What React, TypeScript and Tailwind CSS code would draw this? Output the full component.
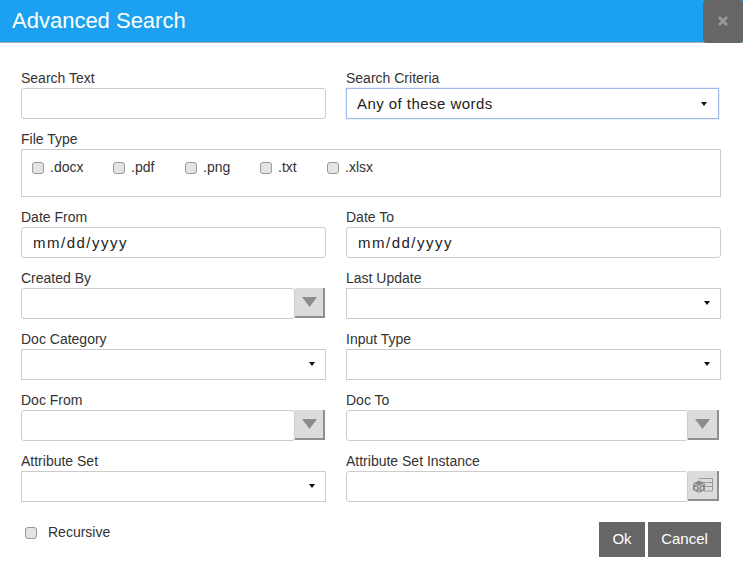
import React from 'react';

const inputBox = 'w-full h-[31px] rounded-[3px] border border-[#ccc] bg-white px-[11px] text-[15px] text-[#222] outline-none';

function Field({ label, children }: { label: string; children: React.ReactNode }) {
  return (
    <div className="flex flex-col">
      <label className="h-5 text-[14px] leading-5 text-[#333]">{label}</label>
      {children}
    </div>
  );
}

function Caret({ className }: { className: string }) {
  return (
    <svg className={`absolute ${className}`} width="6" height="4" viewBox="0 0 6 4">
      <path d="M0 0h6L3 4z" fill="#111" />
    </svg>
  );
}

function SelectBox({ value, focused }: { value?: string; focused?: boolean }) {
  return (
    <div className={focused ? 'relative w-[373px]' : 'relative w-full'}>
      <select
        defaultValue={value ?? ''}
        className={
          focused
            ? 'h-[31px] w-full appearance-none border border-[#9cbdea] bg-white px-[10px] pt-[2px] text-[15px] tracking-[0.45px] text-[#222] shadow-[0_0_2px_#b8d2f5] outline-none'
            : 'h-[31px] w-full appearance-none border border-[#ccc] bg-white px-[10px] text-[15px] outline-none'
        }
      >
        <option value="">{''}</option>
        {value && <option value={value}>{value}</option>}
      </select>
      <Caret className={focused ? 'right-[12px] top-[14px]' : 'right-[11px] top-[13px]'} />
    </div>
  );
}

function ComboBox({ right }: { right?: boolean }) {
  return (
    <div className="flex h-[31px]">
      <input className="h-full min-w-0 flex-1 rounded-[3px] border border-[#ccc] bg-white outline-none" />
      <button
        className={
          right
            ? 'mr-[2px] flex h-[30px] w-[31px] items-center justify-center border-r-2 border-b-2 border-[#8f8f8f] bg-[#dcdcdc]'
            : 'mr-[1px] flex h-[30px] w-[30px] items-center justify-center border-r-2 border-b-2 border-[#8f8f8f] bg-[#dcdcdc]'
        }
      >
        <svg width="15" height="10" viewBox="0 0 15 10">
          <path d="M0 0h15L7.500 10z" fill="#8c8c8c" />
        </svg>
      </button>
    </div>
  );
}

function AttributeIcon() {
  return (
    <svg width="20" height="15" viewBox="0 0 20 15" fill="none">
      <path d="M5.500 0.500h14v12.500H11M8 4.500h11.500M12 8.500h7.500" stroke="#9a9a9a" strokeWidth="1" />
      <path d="M0 5.500L6 2.500l6 3V12l-6 3-6-3z" fill="#8a8a8a" />
      <path d="M0.500 5.500L6 8.500l5.500-3M6 8.500V15" stroke="#dcdcdc" strokeWidth="0.800" />
      <rect x="2" y="9" width="2" height="2.500" fill="#dcdcdc" />
      <rect x="8" y="9" width="2" height="2.500" fill="#dcdcdc" />
    </svg>
  );
}

function Check({ label, className }: { label: string; className: string }) {
  return (
    <label className={`flex items-center text-[14px] text-[#333] ${className}`}>
      <input
        type="checkbox"
        className="h-3 w-3 appearance-none rounded-[3px] border border-[#999] bg-[#e4e4e4]"
      />
      <span className="ml-[6px]">{label}</span>
    </label>
  );
}

export default function App() {
  return (
    <div className="h-[574px] w-[743px] overflow-hidden bg-white font-['Liberation_Sans',Arial,sans-serif]">
      {/* Header */}
      <div className="flex h-[43px] items-center justify-between border-b border-[#a9a9a9] bg-[#1ca1f0]">
        <h1 className="pb-[2px] pl-3 text-[22px] font-normal text-white">Advanced Search</h1>
        <button className="flex h-[43px] w-10 items-center justify-center rounded-[4px] bg-[#666]">
          <svg width="10" height="10" viewBox="0 0 10 10">
            <path d="M1 1l8 8M9 1l-8 8" stroke="#999" strokeWidth="2.600" />
          </svg>
        </button>
      </div>

      <div className="pl-[21px] pr-[22px] pt-[25px]">
        <div className="grid grid-cols-[305px_375px] gap-x-5 gap-y-[10px]">
          <Field label="Search Text">
            <input className={inputBox} />
          </Field>
          <Field label="Search Criteria">
            <SelectBox value="Any of these words" focused />
          </Field>

          <div className="col-span-2 flex flex-col">
            <label className="h-5 text-[14px] leading-5 text-[#333]">File Type</label>
            <div className="flex h-[48px] items-start border border-[#ccc] pl-[10px] pt-[7px]">
              <Check label=".docx" className="w-[81px]" />
              <Check label=".pdf" className="w-[72px]" />
              <Check label=".png" className="w-[75px]" />
              <Check label=".txt" className="w-[67px]" />
              <Check label=".xlsx" className="w-[60px]" />
            </div>
          </div>

          <Field label="Date From">
            <input placeholder="mm/dd/yyyy" className={`${inputBox} tracking-[1.5px] placeholder:text-[#222]`} />
          </Field>
          <Field label="Date To">
            <input placeholder="mm/dd/yyyy" className={`${inputBox} tracking-[1.5px] placeholder:text-[#222]`} />
          </Field>

          <Field label="Created By">
            <ComboBox />
          </Field>
          <Field label="Last Update">
            <SelectBox />
          </Field>

          <Field label="Doc Category">
            <SelectBox />
          </Field>
          <Field label="Input Type">
            <SelectBox />
          </Field>

          <Field label="Doc From">
            <ComboBox />
          </Field>
          <Field label="Doc To">
            <ComboBox right />
          </Field>

          <Field label="Attribute Set">
            <SelectBox />
          </Field>
          <Field label="Attribute Set Instance">
            <div className="flex h-[31px]">
              <input className="h-full min-w-0 flex-1 rounded-[3px] border border-[#ccc] bg-white outline-none" />
              <button className="mr-[2px] flex h-[30px] w-[31px] items-center justify-center border-r-2 border-b-2 border-[#8f8f8f] bg-[#dcdcdc]">
                <AttributeIcon />
              </button>
            </div>
          </Field>
        </div>

        {/* Footer */}
        <div className="mt-5 flex items-start justify-between">
          <Check label="Recursive" className="ml-[4px] [&>span]:ml-[11px]" />
          <div className="flex gap-[3px]">
            <button className="h-[35px] w-[46px] bg-[#666] text-[15px] text-white">Ok</button>
            <button className="h-[35px] w-[73px] bg-[#666] text-[15px] text-white">Cancel</button>
          </div>
        </div>
      </div>
    </div>
  );
}
